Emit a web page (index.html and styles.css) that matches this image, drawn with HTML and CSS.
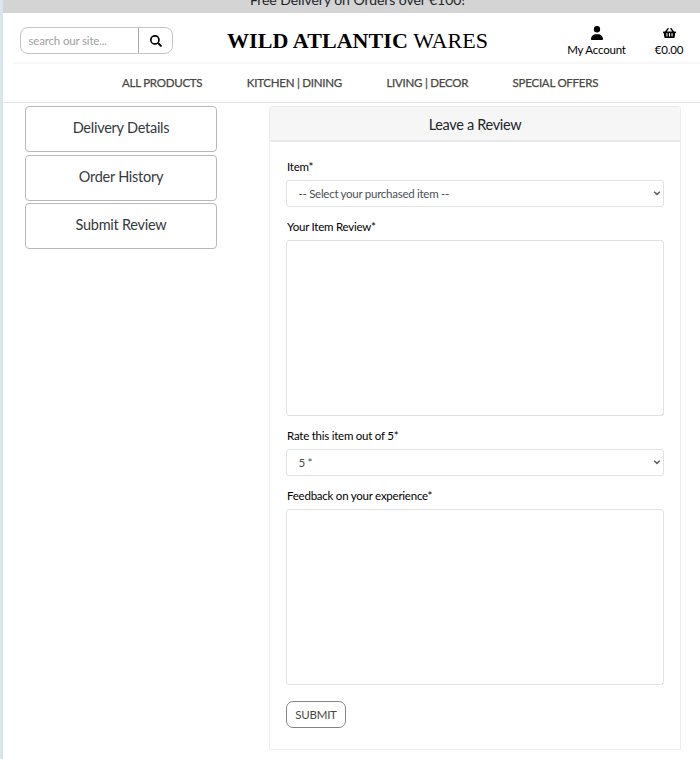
FILE: index.html
```html
<!DOCTYPE html>
<html lang="en">
<head>
<meta charset="utf-8">
<title>Wild Atlantic Wares</title>
<link rel="stylesheet" href="styles.css">
</head>
<body>
<div class="banner"><span>Free Delivery on Orders over €100!</span></div>
<header class="header">
  <form class="search">
    <input class="search-input" type="text" placeholder="search our site...">
    <button class="search-button" type="button" aria-label="Search">
      <svg viewBox="0 0 512 512" width="12" height="12"><path d="M505 443 405 343c-5-5-11-7-17-7h-16a208 208 0 1 0-36 36v16c0 6 2 12 7 17l100 100c9 9 25 9 34 0l28-28c9-9 9-25 0-34zM208 346a138 138 0 1 1 0-276 138 138 0 0 1 0 276z" fill-rule="evenodd"/></svg>
    </button>
  </form>
  <a class="brand"><strong>WILD ATLANTIC</strong> WARES</a>
  <a class="tool account">
    <svg viewBox="0 0 448 512" width="12" height="14" preserveAspectRatio="none"><path d="M224 240a118 118 0 1 0 0-236 118 118 0 0 0 0 236zM178 304C80 304 0 384 0 482c0 17 13 30 30 30h388c17 0 30-13 30-30 0-98-80-178-178-178z"/></svg>
    <span>My Account</span>
  </a>
  <a class="tool basket">
    <svg viewBox="0 0 576 512" width="13" height="12"><path fill-rule="evenodd" d="M576 216v16c0 13-11 24-24 24h-8l-26 182c-3 24-23 42-47 42H105c-24 0-44-18-47-42L32 256h-8c-13 0-24-11-24-24v-16c0-13 11-24 24-24h67L199 44c10-14 30-18 44-7 15 10 18 30 8 44l-82 111h238L325 81c-10-14-7-34 8-44 14-11 34-7 44 7l108 148h67c13 0 24 11 24 24zM312 392V280c0-13-11-24-24-24s-24 11-24 24v112c0 13 11 24 24 24s24-11 24-24zm112 0V280c0-13-11-24-24-24s-24 11-24 24v112c0 13 11 24 24 24s24-11 24-24zm-224 0V280c0-13-11-24-24-24s-24 11-24 24v112c0 13 11 24 24 24s24-11 24-24z"/></svg>
    <span>€0.00</span>
  </a>
</header>
<nav class="nav">
  <a>ALL PRODUCTS</a>
  <a>KITCHEN | DINING</a>
  <a>LIVING | DECOR</a>
  <a>SPECIAL OFFERS</a>
</nav>
<main class="main">
  <aside class="side">
    <a class="side-link">Delivery Details</a>
    <a class="side-link">Order History</a>
    <a class="side-link">Submit Review</a>
  </aside>
  <section class="card">
    <h1 class="card-title"><span>Leave a Review</span></h1>
    <form class="form">
      <label class="label"><span>Item*</span></label>
      <div class="select"><span>-- Select your purchased item --</span>
        <svg viewBox="0 0 8 6" width="8" height="6"><path d="M1.2 1.7 4 4.4 6.8 1.7"/></svg></div>
      <label class="label"><span>Your Item Review*</span></label>
      <textarea class="area"></textarea>
      <label class="label"><span>Rate this item out of 5*</span></label>
      <div class="select"><span>5 *</span>
        <svg viewBox="0 0 8 6" width="8" height="6"><path d="M1.2 1.7 4 4.4 6.8 1.7"/></svg></div>
      <label class="label"><span>Feedback on your experience*</span></label>
      <textarea class="area"></textarea>
      <button class="submit" type="button">SUBMIT</button>
    </form>
  </section>
</main>
</body>
</html>
```
FILE: styles.css
```css
* { box-sizing: border-box; }
body {
  margin: 0;
  height: 759px;
  overflow: hidden;
  border-left: 3px solid #d9e5e8;
  background: #fff;
  color: #000;
  font-family: Lato, sans-serif;
  font-size: 11.5px;
}
.banner {
  height: 13px;
  background: #d4d4d4;
  overflow: hidden;
  display: flex;
  align-items: flex-end;
  justify-content: center;
  padding-left: 12px;
  font-size: 14px;
  letter-spacing: -0.06px;
  line-height: 20px;
  color: #212529;
}
.banner span { margin-bottom: 3px; }
.header {
  height: 51px;
  margin-left: 10px;
  border-bottom: 2px solid #f7f7f7;
  display: grid;
  grid-template-columns: 214px 262px 70px 1fr;
}
.search {
  display: flex;
  width: 153px;
  height: 27px;
  margin: 14px 0 0 7px;
  border: 1px solid #c4c4c4;
  border-radius: 8px;
}
.search-input {
  width: 118px;
  padding: 0 7.5px;
  border: 0;
  border-right: 1px solid #a8a8a8;
  background: transparent;
  font: 11.5px Lato, sans-serif;
  letter-spacing: -0.17px;
}
.search-input::placeholder { color: #a0a0a0; }
.search-button {
  flex: 1;
  padding: 0;
  border: 0;
  background: none;
  display: flex;
  align-items: center;
  justify-content: center;
}
.brand {
  margin-top: 15px;
  font: 22px/26px "Liberation Serif", serif;
  letter-spacing: 0.08px;
  white-space: nowrap;
}
.tool {
  display: flex;
  flex-direction: column;
  align-items: center;
  white-space: nowrap;
  letter-spacing: -0.2px;
}
.tool span { line-height: 15px; }
.account { width: 70px; margin: 13px 0 0 72.5px; }
.account span { margin-top: 2px; }
.basket { width: 40px; margin: 14px 0 0 90px; }
.basket span { margin-top: 3px; }
.nav {
  height: 39px;
  border-bottom: 1px solid #e3e3e3;
  padding: 0 0 1px 119px;
  display: flex;
  align-items: center;
  gap: 44.5px;
  color: #474740;
  letter-spacing: -0.25px;
  -webkit-text-stroke: 0.25px #474740;
  white-space: nowrap;
}
.main {
  display: grid;
  grid-template-columns: 192px 412px;
  column-gap: 52px;
  align-items: start;
  padding: 3px 0 0 22px;
}
.side { display: grid; gap: 2.5px; }
.side-link {
  height: 46px;
  border: 1px solid #b8b8b8;
  border-radius: 4px;
  text-align: center;
  font-size: 14.5px;
  letter-spacing: -0.25px;
  line-height: 41px;
  color: #343a40;
}
.card {
  height: 644px;
  border: 1px solid #ececee;
  border-radius: 3px 3px 0 0;
}
.card-title {
  height: 35px;
  margin: 0;
  border-bottom: 2px solid #e8e8ec;
  background: #f6f6f6;
  font-size: 14.5px;
  font-weight: 400;
  letter-spacing: -0.33px;
  line-height: 35px;
  text-align: center;
  color: #212529;
}
.form { padding: 16px 16px 0; letter-spacing: -0.24px; }
.label { display: block; height: 22px; padding-left: 1px; line-height: 18px; }
.select {
  height: 27px;
  margin-bottom: 11px;
  padding: 0 2px 1px 11.5px;
  border: 1px solid #dfe2e7;
  border-radius: 3px;
  display: flex;
  align-items: center;
  justify-content: space-between;
  color: #495057;
  letter-spacing: -0.27px;
}
.select svg { fill: none; stroke: #5a6067; stroke-width: 1.5; }
.area {
  display: block;
  width: 378px;
  height: 176px;
  margin: 0 0 11px;
  border: 1px solid #dfe2e7;
  border-radius: 3px;
  background: linear-gradient(#999, #999) right bottom / 1px 1px no-repeat;
  resize: none;
}
.submit {
  width: 60px;
  height: 27px;
  margin-top: 5px;
  padding: 0 0 1px;
  border: 1px solid #858580;
  border-radius: 7px;
  background: #fff;
  color: #474740;
  font: 11.5px Lato, sans-serif;
  letter-spacing: -0.25px;
}
```
